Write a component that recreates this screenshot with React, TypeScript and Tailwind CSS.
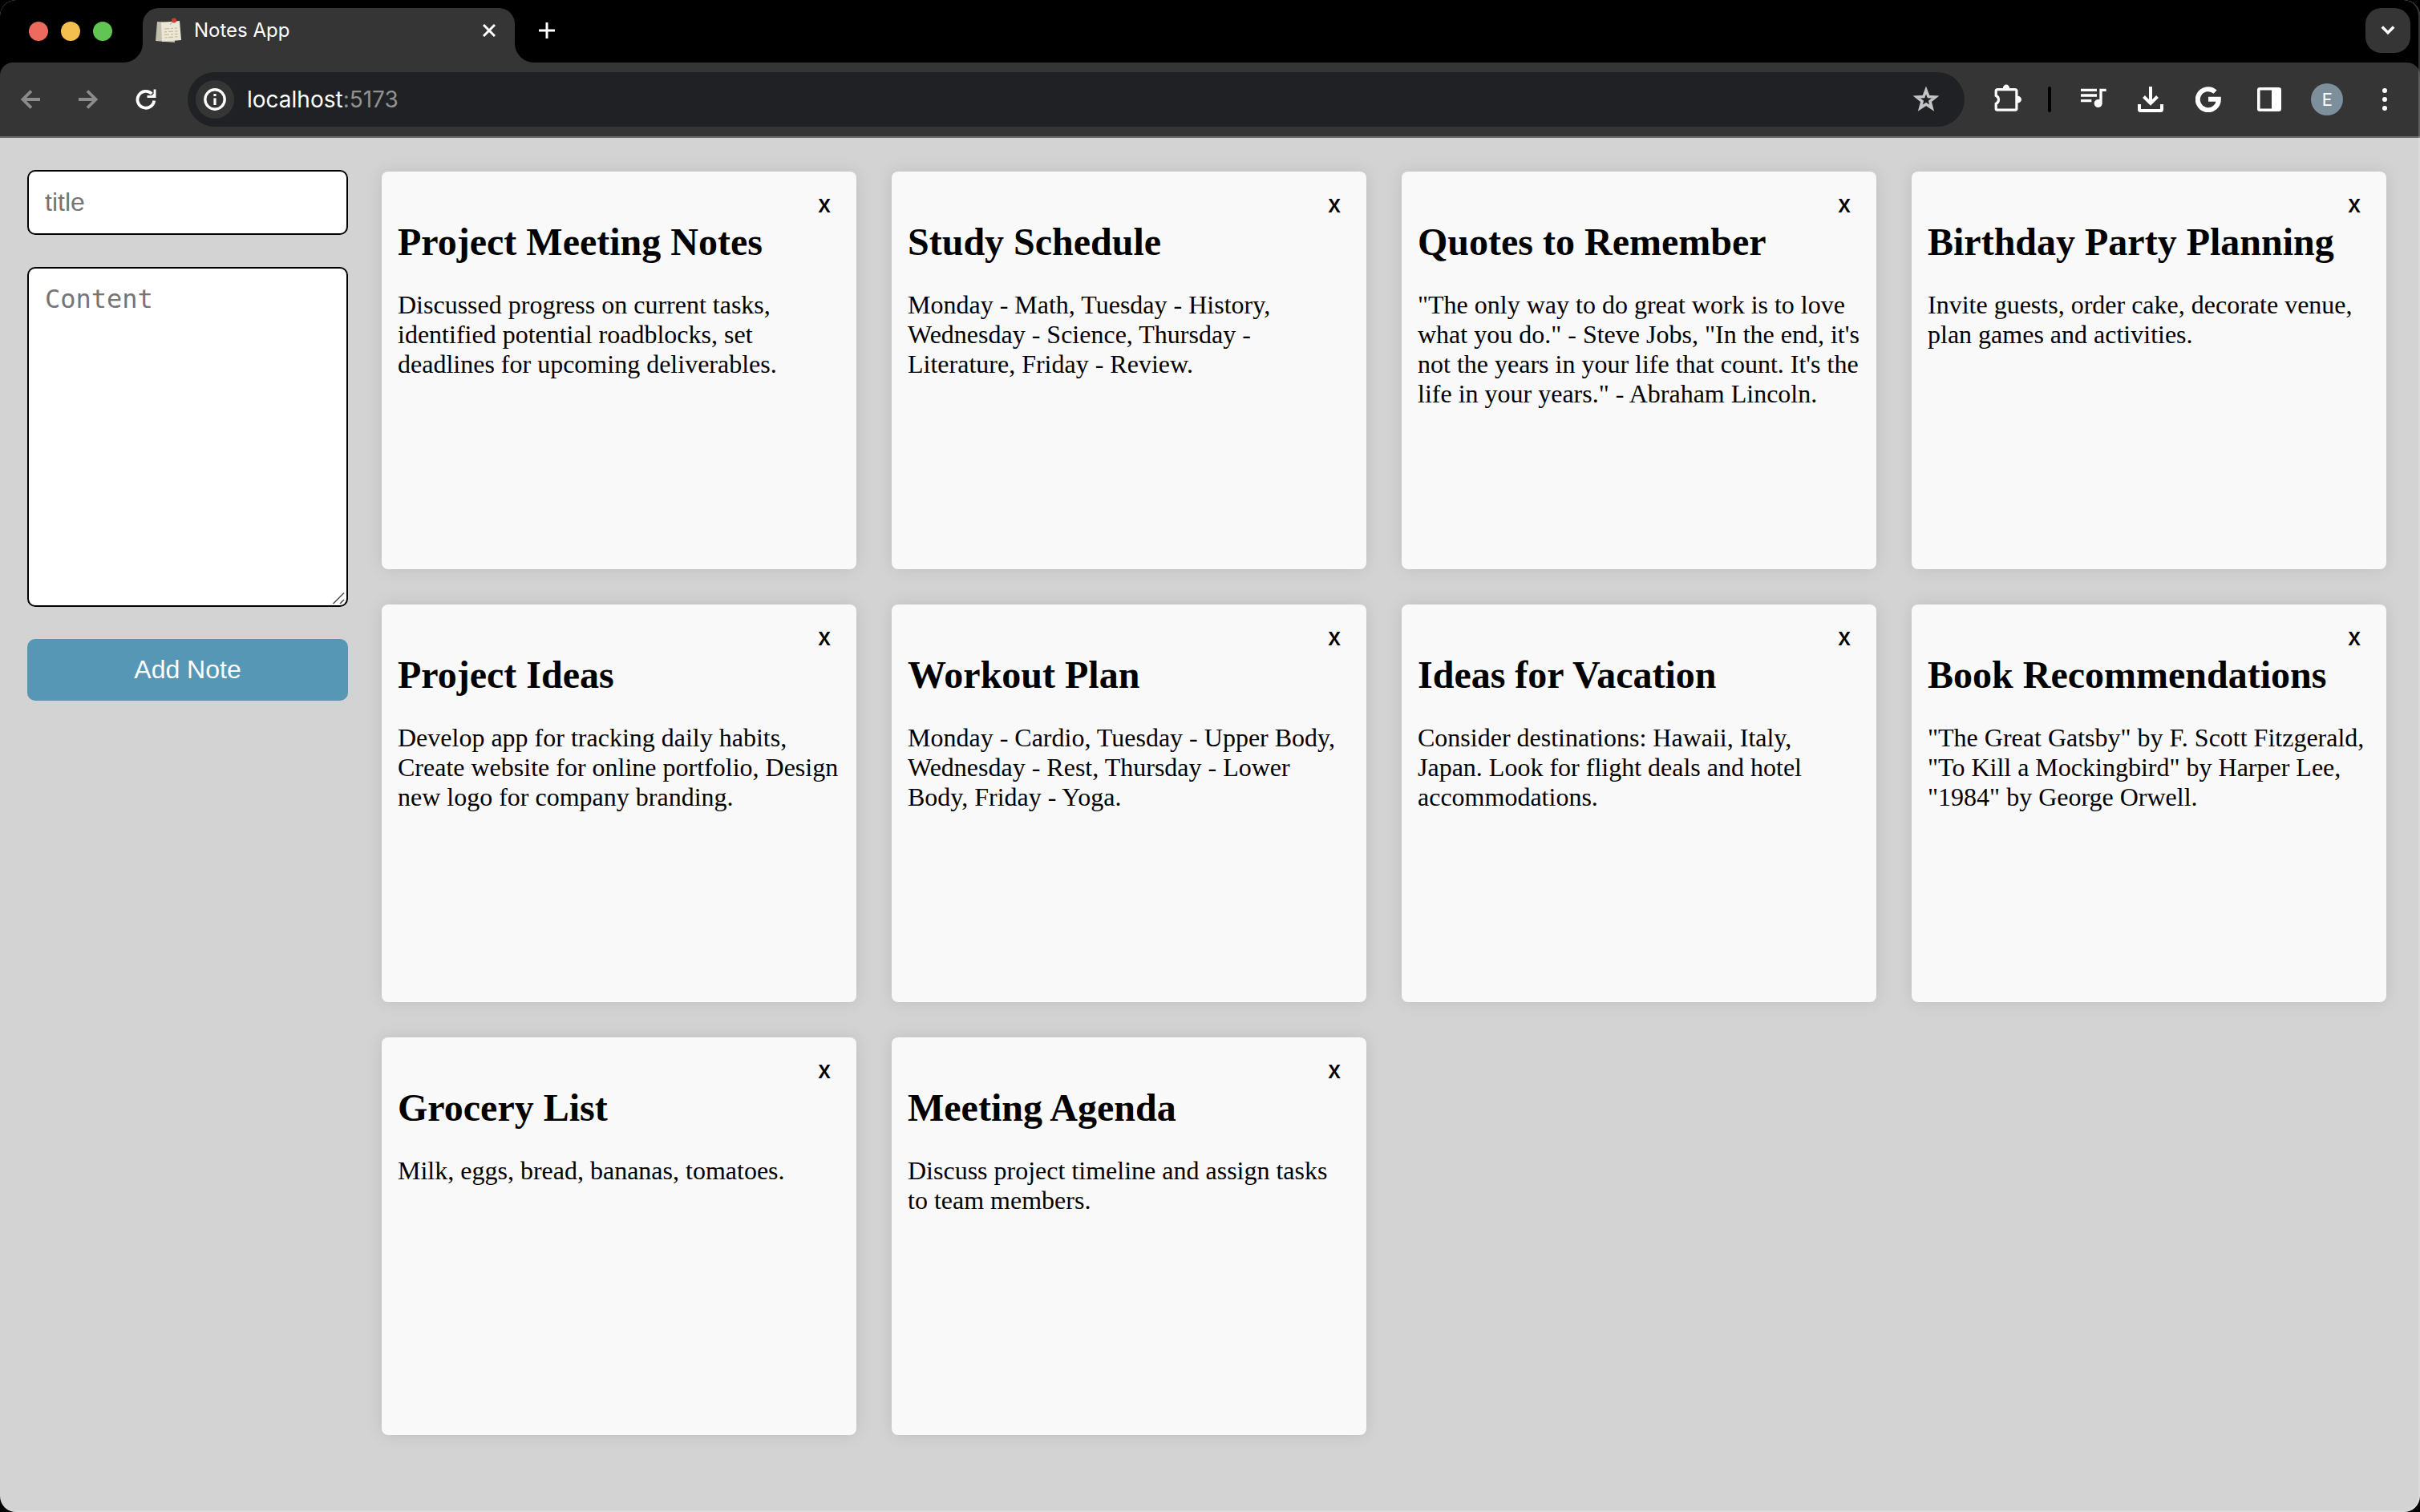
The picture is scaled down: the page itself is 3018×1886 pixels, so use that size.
import { useState } from "react";
import type { FormEvent, ReactNode } from "react";

type Note = { id: number; title: string; content: string };

const initialNotes: Note[] = [
  { id: 1, title: "Project Meeting Notes", content: "Discussed progress on current tasks, identified potential roadblocks, set deadlines for upcoming deliverables." },
  { id: 2, title: "Study Schedule", content: "Monday - Math, Tuesday - History, Wednesday - Science, Thursday - Literature, Friday - Review." },
  { id: 3, title: "Quotes to Remember", content: "\"The only way to do great work is to love what you do.\" - Steve Jobs, \"In the end, it's not the years in your life that count. It's the life in your years.\" - Abraham Lincoln." },
  { id: 4, title: "Birthday Party Planning", content: "Invite guests, order cake, decorate venue, plan games and activities." },
  { id: 5, title: "Project Ideas", content: "Develop app for tracking daily habits, Create website for online portfolio, Design new logo for company branding." },
  { id: 6, title: "Workout Plan", content: "Monday - Cardio, Tuesday - Upper Body, Wednesday - Rest, Thursday - Lower Body, Friday - Yoga." },
  { id: 7, title: "Ideas for Vacation", content: "Consider destinations: Hawaii, Italy, Japan. Look for flight deals and hotel accommodations." },
  { id: 8, title: "Book Recommendations", content: "\"The Great Gatsby\" by F. Scott Fitzgerald, \"To Kill a Mockingbird\" by Harper Lee, \"1984\" by George Orwell." },
  { id: 9, title: "Grocery List", content: "Milk, eggs, bread, bananas, tomatoes." },
  { id: 10, title: "Meeting Agenda", content: "Discuss project timeline and assign tasks to team members." },
];

function IconButton({ label, className = "", children }: { label: string; className?: string; children: ReactNode }) {
  return (
    <button type="button" aria-label={label} className={`flex size-14 shrink-0 items-center justify-center ${className}`}>
      {children}
    </button>
  );
}

function NoteFavicon() {
  return (
    <svg viewBox="0 0 32 32" className="size-8 shrink-0 overflow-visible" aria-hidden="true">
      <path d="M2 5 L22 6 L24 31 L0 29 Z" fill="#c3bfae" />
      <path d="M7 6 L30 4 L32 28 L8 30 Z" fill="#ebe6d6" />
      <path d="M11 14 l6 -.4 M19 13.500 l3 -.2 M24 13.200 l3 -.2 M11 17.800 l3 -.2 M16 17.500 l6 -.4 M24 17 l3.500 -.2 M11 21.400 l6 -.4 M19 21 l3 -.2 M24 20.600 l3.500 -.2 M11.500 25 l3 -.2 M16 24.700 l6 -.4 M24 24 l3.500 -.2" stroke="#cdb891" strokeWidth="1.200" fill="none" />
      <path d="M22 4 L18 9" stroke="#a9b2b8" strokeWidth="1.200" />
      <circle cx="23" cy="3.500" r="3" fill="#d03d2c" />
    </svg>
  );
}

function TabStrip() {
  return (
    <div className="flex h-[78px] items-start bg-black pt-[10px] pr-3 pl-9">
      <div className="flex h-[58px] items-center gap-4">
        <button type="button" aria-label="Close window" className="size-6 rounded-full bg-[#ed6a5e]" />
        <button type="button" aria-label="Minimize window" className="size-6 rounded-full bg-[#f5bf4f]" />
        <button type="button" aria-label="Zoom window" className="size-6 rounded-full bg-[#61c554]" />
      </div>
      <div className="relative ml-[38px] h-[68px] w-[464px] rounded-t-[20px] bg-[#353535]">
        <span className="absolute bottom-0 -left-6 size-6 bg-[#353535]">
          <span className="block size-full rounded-br-[24px] bg-black" />
        </span>
        <span className="absolute -right-6 bottom-0 size-6 bg-[#353535]">
          <span className="block size-full rounded-bl-[24px] bg-black" />
        </span>
        <div className="flex h-14 items-center pr-4 pl-4">
          <NoteFavicon />
          <span className="ml-4 flex-1 text-2xl text-white">Notes App</span>
          <button type="button" aria-label="Close tab" className="flex size-8 items-center justify-center text-white">
            <svg viewBox="0 0 16 16" className="size-4" fill="none" stroke="currentColor" strokeWidth="3">
              <path d="M1 1 L15 15 M15 1 L1 15" />
            </svg>
          </button>
        </div>
      </div>
      <button type="button" aria-label="New tab" className="ml-6 flex h-14 w-8 items-center justify-center text-white">
        <svg viewBox="0 0 20 20" className="size-5" fill="none" stroke="currentColor" strokeWidth="3">
          <path d="M10 0 V20 M0 10 H20" />
        </svg>
      </button>
      <button type="button" aria-label="Search tabs" className="ml-auto flex size-14 items-center justify-center rounded-[20px] bg-[#353535] text-white">
        <svg viewBox="0 0 18 12" className="h-3 w-[18px]" fill="none" stroke="currentColor" strokeWidth="3.500">
          <path d="M1.800 1.500 L9 8.700 L16.200 1.500" />
        </svg>
      </button>
    </div>
  );
}

function Toolbar() {
  return (
    <div className="bg-black">
      <div className="flex h-[94px] items-center rounded-t-[16px] border-b-2 border-[#6a6a6a] bg-[#353535] pr-4 pl-[10px] text-white">
        <div className="flex gap-4">
          <IconButton label="Back" className="text-[#8c8c8c]">
            <svg viewBox="0 0 24 24" className="size-6" fill="none" stroke="currentColor" strokeWidth="3.800">
              <path d="M24 12 H3 M13 1.500 L2.500 12 L13 22.500" />
            </svg>
          </IconButton>
          <IconButton label="Forward" className="text-[#8c8c8c]">
            <svg viewBox="0 0 24 24" className="size-6" fill="none" stroke="currentColor" strokeWidth="3.800">
              <path d="M0 12 H21 M11 1.500 L21.500 12 L11 22.500" />
            </svg>
          </IconButton>
          <IconButton label="Reload">
            <svg viewBox="0 0 26 26" className="size-[26px]" fill="none" stroke="currentColor" strokeWidth="3.800">
              <path d="M20.300 6 A10.400 10.400 0 1 0 23.200 14.500" />
              <path d="M14.500 10.900 H25.500 V0.500 H22.600 V6 L20 8 H14.500 Z" fill="currentColor" stroke="none" />
            </svg>
          </IconButton>
        </div>
        <div className="ml-6 flex h-[68px] flex-1 items-center rounded-full bg-[#202124] pr-3 pl-[10px]">
          <button type="button" aria-label="View site information" className="flex size-12 items-center justify-center rounded-full bg-[#353535]">
            <svg viewBox="0 0 28 28" className="size-7" fill="none" stroke="currentColor">
              <circle cx="14" cy="14" r="12.200" strokeWidth="3.400" />
              <path d="M14 12.400 V21" strokeWidth="3.200" />
              <path d="M14 7 V10" strokeWidth="3.200" />
            </svg>
          </button>
          <div className="ml-4 flex-1 text-[28px]">
            localhost<span className="text-[#919191]">:5173</span>
          </div>
          <button type="button" aria-label="Bookmark this page" className="mr-2 flex h-14 w-14 items-center justify-center text-[#c4c4c4]">
            <svg viewBox="0 0 40 40" className="size-10" fill="none" stroke="currentColor" strokeWidth="3.600" strokeMiterlimit="10">
              <path d="M20 8.600 L23.060 16.590 L31.600 17.030 L24.950 22.410 L27.170 30.670 L20 26 L12.830 30.670 L15.050 22.410 L8.400 17.030 L16.940 16.590 Z" />
            </svg>
          </button>
        </div>
        <IconButton label="Extensions" className="ml-[26px]">
          <svg viewBox="0 0 36 36" className="size-9 overflow-visible" fill="none" stroke="currentColor" strokeWidth="3.200">
            <path d="M3.200 13.200 V7.300 a1.700 1.700 0 0 1 1.700 -1.700 H27.200 a1.700 1.700 0 0 1 1.700 1.700 V29.500 a1.700 1.700 0 0 1 -1.700 1.700 H4.900 a1.700 1.700 0 0 1 -1.700 -1.700 V23.400 A5.600 5.600 0 0 0 3.200 13.200 Z" />
            <path d="M11.800 4.200 a4.200 4.700 0 0 1 8.400 0 Z M30 13.800 a5 4.300 0 0 1 0 8.600 Z" fill="currentColor" stroke="none" />
          </svg>
        </IconButton>
        <span className="mr-6 ml-[22px] h-8 w-1 rounded-full bg-black" />
        <div className="flex gap-4">
          <IconButton label="Media controls">
            <svg viewBox="0 2 24 24" className="size-10" fill="currentColor">
              <path d="M15 6H3v2h12V6zm0 4H3v2h12v-2zM3 16h8v-2H3v2zM17 6v8.180c-.31-.11-.65-.18-1-.18-1.660 0-3 1.340-3 3s1.340 3 3 3 3-1.340 3-3V8h3V6h-5z" />
            </svg>
          </IconButton>
          <IconButton label="Downloads">
            <svg viewBox="0 0 32 32" className="size-8" fill="none" stroke="currentColor" strokeWidth="4">
              <path d="M16 0 V21 M7.500 12.500 L16 21 L24.500 12.500" />
              <path d="M2 22 V28.500 a1.500 1.500 0 0 0 1.500 1.500 H28.500 a1.500 1.500 0 0 0 1.500 -1.500 V22" />
            </svg>
          </IconButton>
          <IconButton label="Google">
            <svg viewBox="0 0 32 32" className="size-8" fill="none" stroke="currentColor" strokeWidth="6">
              <path d="M24.600 6.600 A13 13 0 1 0 28.800 15.800 H16" />
            </svg>
          </IconButton>
          <IconButton label="Side panel" className="ml-1">
            <svg viewBox="0 0 30 30" className="size-[30px]" fill="none" stroke="currentColor" strokeWidth="3.600">
              <rect x="1.800" y="1.800" width="26.400" height="26.400" rx="1.500" />
              <path d="M18 2 H28 V28 H18 Z" fill="currentColor" stroke="none" />
            </svg>
          </IconButton>
          <IconButton label="Profile">
            <span className="flex size-10 items-center justify-center rounded-full bg-[#7c8f9b] font-[Roboto,sans-serif] text-[22px]">E</span>
          </IconButton>
          <IconButton label="Menu">
            <svg viewBox="0 0 6 28" className="h-7 w-1.5" fill="currentColor">
              <circle cx="3" cy="3" r="3" />
              <circle cx="3" cy="14" r="3" />
              <circle cx="3" cy="25" r="3" />
            </svg>
          </IconButton>
        </div>
      </div>
    </div>
  );
}

function NoteCard({ note, onDelete }: { note: Note; onDelete: () => void }) {
  return (
    <article className="min-h-[496px] rounded-[8px] bg-[#f9f9f9] p-5 shadow-[0_0_20px_rgba(0,0,0,0.1)]">
      <div className="flex justify-end">
        <button
          type="button"
          aria-label={`Delete ${note.title}`}
          onClick={onDelete}
          className="h-10 w-10 text-center font-[Inter,sans-serif] text-[30px] leading-10 font-medium"
        >
          x
        </button>
      </div>
      <h2 className="text-5xl leading-[55px] font-bold">{note.title}</h2>
      <p className="mt-[33px] text-[32px] leading-[37px]">{note.content}</p>
    </article>
  );
}

export default function App() {
  const [notes, setNotes] = useState<Note[]>(initialNotes);
  const [title, setTitle] = useState("");
  const [content, setContent] = useState("");

  const addNote = (event: FormEvent) => {
    event.preventDefault();
    setNotes([{ id: Date.now(), title, content }, ...notes]);
    setTitle("");
    setContent("");
  };

  return (
    <div className="bg-black">
      <div className="relative flex min-h-screen flex-col overflow-hidden rounded-[20px] bg-[#d3d3d3] text-black">
        <header className="font-[Inter,sans-serif]">
          <TabStrip />
          <Toolbar />
        </header>
        <main className="flex flex-1 items-start gap-[42px] pt-10 pr-[42px] pb-10 pl-[34px] font-['Liberation_Serif','Times_New_Roman',serif]">
          <form onSubmit={addNote} className="flex w-[400px] shrink-0 flex-col gap-10 text-[32px] leading-[37px]">
            <input
              aria-label="Title"
              placeholder="title"
              required
              value={title}
              onChange={(event) => setTitle(event.target.value)}
              className="h-[81px] w-full rounded-[10px] border-2 border-black bg-white px-5 font-['Liberation_Sans',Arial,sans-serif] shadow-none placeholder:text-[#757575]"
            />
            <div className="relative">
              <textarea
                aria-label="Content"
                placeholder="Content"
                required
                value={content}
                onChange={(event) => setContent(event.target.value)}
                className="block h-[424px] w-full resize-none rounded-[10px] border-2 border-black bg-white p-5 font-['DejaVu_Sans_Mono',monospace] placeholder:text-[#757575]"
              />
              <svg viewBox="0 0 16 16" className="pointer-events-none absolute right-1 bottom-[3px] size-4" fill="none" stroke="#4a4a4a" strokeWidth="1.500" aria-hidden="true">
                <path d="M1.500 15 L15 1.500 M10 15 L15 10" />
              </svg>
            </div>
            <button type="submit" className="rounded-[10px] bg-[#5597b5] py-5 font-['Liberation_Sans',Arial,sans-serif] text-white">
              Add Note
            </button>
          </form>
          <section aria-label="Notes" className="mt-0.5 grid flex-1 grid-cols-4 gap-11">
            {notes.map((note) => (
              <NoteCard key={note.id} note={note} onDelete={() => setNotes(notes.filter((item) => item.id !== note.id))} />
            ))}
          </section>
        </main>
        <div className="pointer-events-none absolute inset-0 rounded-[20px] border-r-2 border-b-2 border-white/20" />
      </div>
    </div>
  );
}
